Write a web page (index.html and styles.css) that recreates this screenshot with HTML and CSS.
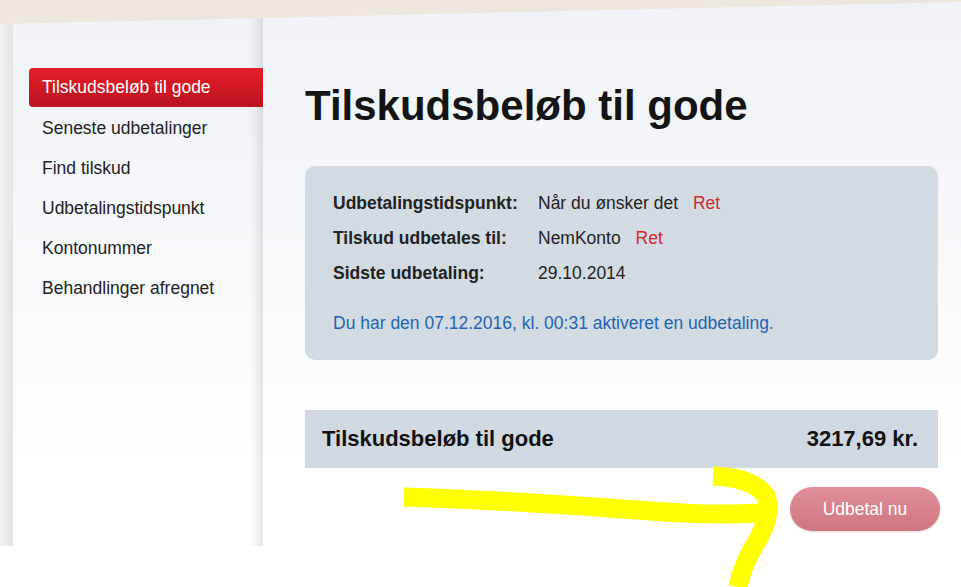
FILE: index.html
```html
<!DOCTYPE html>
<html lang="da">

<head>
  <meta charset="UTF-8">
  <meta name="viewport" content="width=device-width, initial-scale=1.0">
  <title>Tilskudsbeløb til gode</title>
  <link rel="stylesheet" href="styles.css">
</head>

<body>
  <div class="frame">
    <div class="sheet">
      <nav class="sidebar">
        <a class="nav-item active" href="#">Tilskudsbeløb til gode</a>
        <a class="nav-item" href="#">Seneste udbetalinger</a>
        <a class="nav-item" href="#">Find tilskud</a>
        <a class="nav-item" href="#">Udbetalingstidspunkt</a>
        <a class="nav-item" href="#">Kontonummer</a>
        <a class="nav-item" href="#">Behandlinger afregnet</a>
      </nav>

      <main class="content">
        <h1>Tilskudsbeløb til gode</h1>

        <div class="info-box">
          <div class="info-row">
            <span class="info-label">Udbetalingstidspunkt:</span>
            <span class="info-value">Når du ønsker det <a class="edit" href="#">Ret</a></span>
          </div>
          <div class="info-row">
            <span class="info-label">Tilskud udbetales til:</span>
            <span class="info-value">NemKonto <a class="edit" href="#">Ret</a></span>
          </div>
          <div class="info-row">
            <span class="info-label">Sidste udbetaling:</span>
            <span class="info-value">29.10.2014</span>
          </div>
          <p class="notice">Du har den 07.12.2016, kl. 00:31 aktiveret en udbetaling.</p>
        </div>

        <div class="total-bar">
          <span>Tilskudsbeløb til gode</span>
          <span>3217,69 kr.</span>
        </div>

        <div class="actions">
          <button type="button" class="pay-button">Udbetal nu</button>
        </div>
      </main>
    </div>
  </div>

  <!-- hand drawn marker arrow on top of the screenshot -->
  <svg class="marker" width="961" height="587" viewBox="0 0 961 587">
    <path d="M404,497 C470,499 540,503 610,508 C660,512 710,516 760,513" />
    <path d="M713,476 C738,477 756,482 766,496 C772,512 764,530 753,548 C746,560 741,572 738,587" />
  </svg>
</body>

</html>
```

FILE: styles.css
```css
html {
  overflow: hidden;
}

body {
  margin: 0;
  min-height: 587px;
  background: #fff;
  font-family: "Liberation Sans", Arial, sans-serif;
  color: #222;
  position: relative;
}

.frame {
  position: relative;
  height: 546px;
  padding: 2px 0 0 13px;
  box-sizing: border-box;
  background: linear-gradient(to right, #f4f4f4, #e4e4e4 13px);
}

/* slanted beige top edge */
.frame::before {
  content: "";
  position: absolute;
  top: 0;
  left: 0;
  right: 0;
  height: 24px;
  background: #ece6dc;
  clip-path: polygon(0 0, 100% 0, 100% 2px, 0 100%);
  z-index: 2;
}

.sheet {
  display: flex;
  height: 100%;
  border-top-left-radius: 8px;
  background: linear-gradient(to bottom, #eff3f7 0, #f6f8fa 250px, #fff 460px);
}

.sidebar {
  width: 250px;
  flex-shrink: 0;
  padding-top: 66px;
  box-sizing: border-box;
  box-shadow: inset -14px 0 12px -10px rgba(0, 0, 0, 0.14);
}

.nav-item {
  display: block;
  height: 40px;
  line-height: 40px;
  margin-left: 16px;
  padding-left: 13px;
  font-size: 17.5px;
  color: #222;
  text-decoration: none;
}

.nav-item.active {
  height: 39px;
  line-height: 39px;
  margin-bottom: 1px;
  color: #fff;
  border-radius: 4px 0 0 4px;
  background: linear-gradient(to bottom, #e61e28, #b8141f);
}

.content {
  flex: 1;
  padding: 80px 23px 0 42px;
}

h1 {
  margin: 0;
  font-size: 42px;
  line-height: 48px;
  font-weight: bold;
  color: #141414;
}

.info-box {
  margin-top: 36px;
  padding: 20px 28px 19px;
  background: #d3dbe2;
  border-radius: 10px;
}

.info-row {
  display: flex;
  height: 35px;
  line-height: 35px;
  font-size: 17.5px;
}

.info-label {
  width: 205px;
  font-weight: bold;
}

.edit {
  margin-left: 10px;
  color: #d2282e;
  text-decoration: none;
}

.notice {
  margin: 15px 0 0;
  line-height: 35px;
  font-size: 17.5px;
  color: #1f63b5;
}

.total-bar {
  display: flex;
  justify-content: space-between;
  align-items: center;
  height: 58px;
  margin-top: 50px;
  padding: 0 20px 0 17px;
  background: #d0d9e1;
  font-size: 22px;
  font-weight: bold;
  color: #111;
}

.actions {
  display: flex;
  justify-content: flex-end;
  margin: 19px -2px 0 0;
}

.pay-button {
  width: 150px;
  height: 44px;
  border: none;
  border-radius: 22px;
  background: linear-gradient(to bottom, #df8e97, #cf7680);
  box-shadow: 0 1px 2px rgba(0, 0, 0, 0.15);
  color: #fff;
  font-family: inherit;
  font-size: 17.5px;
  cursor: pointer;
}

.marker {
  position: absolute;
  top: 0;
  left: 0;
  pointer-events: none;
}

.marker path {
  fill: none;
  stroke: #ffff00;
  stroke-width: 19;
  stroke-linejoin: round;
}
```
